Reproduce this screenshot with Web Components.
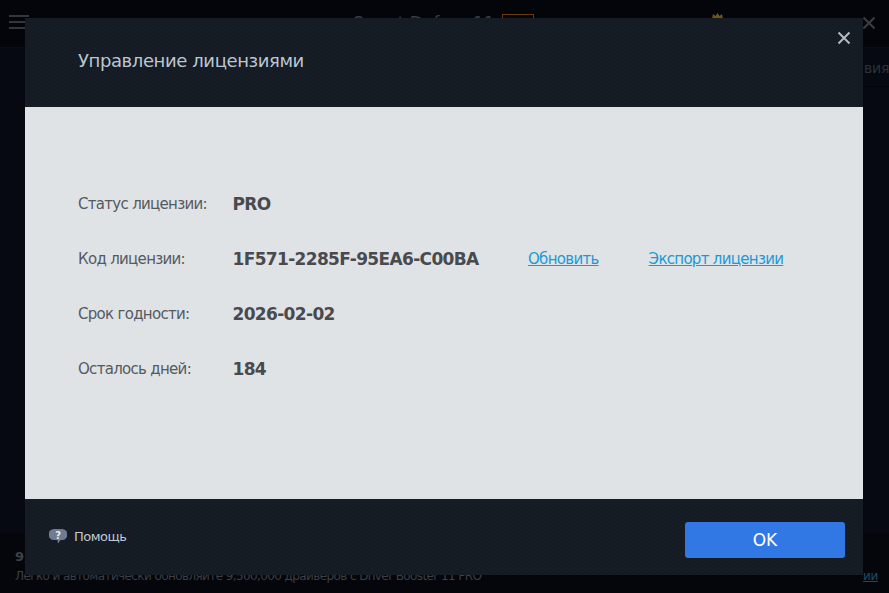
<!DOCTYPE html>
<html>
<head>
<meta charset="utf-8">
<title>Управление лицензиями</title>
<style>
    html, body { margin: 0; height: 100%; background: #04060c; overflow: hidden; }
    body { font-family: "DejaVu Sans", "Liberation Sans", sans-serif; }
</style>
</head>
<body>
<app-shell>
    <license-dialog heading="Управление лицензиями">
        <license-row label="Статус лицензии:" value="PRO"></license-row>
        <license-row label="Код лицензии:" value="1F571-2285F-95EA6-C00BA">
            <a href="#">Обновить</a>
            <a href="#">Экспорт лицензии</a>
        </license-row>
        <license-row label="Срок годности:" value="2026-02-02"></license-row>
        <license-row label="Осталось дней:" value="184"></license-row>
    </license-dialog>
</app-shell>

<script>
const TMP_SHELL = document.createElement('template');
TMP_SHELL.innerHTML = `
    <style>
        :host {
            display: block;
            position: relative;
            width: 889px;
            height: 593px;
            overflow: hidden;
            color: #3c4048;
            font-size: 12px;
        }
        #top {
            height: 47px;
            display: flex;
            align-items: flex-start;
            padding: 15px 0 0 9px;
            box-sizing: border-box;
            background: #03050b;
        }
        #burger { flex: none; width: 20px; height: 14px; border-top: 2px solid #33363b; border-bottom: 2px solid #33363b; position: relative; box-sizing: border-box; }
        #burger::after { content: ''; position: absolute; left: 0; right: 0; top: 4px; height: 2px; background: #33363b; }
        #title { flex: none; display: flex; width: 181px; justify-content: space-between; margin: -2px 0 0 324px; font-size: 17px; line-height: 20px; white-space: nowrap; color: #3a3d42; }
        #badge { display: block; width: 30px; height: 14px; margin-top: 1px; border: 1px solid #6b3a0c; }
        #crown { flex: none; width: 11px; height: 6px; margin: -2px 0 0 178px; }
        #close { flex: none; width: 12px; height: 12px; margin: 2px 0 0 140px; }
        #tab { position: absolute; left: 0; top: 47px; width: 25px; height: 3px; background: #172a4b; }
        #mid { height: 486px; background: #060911; position: relative; border-top: 1px solid #0b0e15; box-sizing: border-box; }
        #more { position: absolute; left: 864px; top: 0; width: 25px; height: 38px; line-height: 41px; overflow: hidden; font-size: 14px; letter-spacing: -.2px; color: #2e3238; border-bottom: 1px solid #02030a; }
        #bottom { height: 60px; background: #04060c; padding: 16px 0 0 15px; box-sizing: border-box; position: relative; }
        #bottom b { display: block; font-size: 13px; color: #3e4147; line-height: 15px; }
        #bottom span { display: block; margin-top: 5px; line-height: 15px; font-size: 12px; letter-spacing: -.6px; color: #3b3f46; white-space: nowrap; }
        #bottom a { position: absolute; left: 863px; top: 36px; color: #1d4a66; font-size: 12px; letter-spacing: -.4px; }
    </style>
    <div id="top">
        <div id="burger"></div>
        <div id="title"><span>Smart Defrag 11</span><span id="badge"></span></div>
        <svg id="crown" viewBox="0 0 11 6"><path d="M0 6 1 1 3.500 3 5.500 0 7.500 3 10 1 11 6z" fill="#6e5512"/></svg>
        <svg id="close" viewBox="0 0 12 12"><path d="M.5.500 11.500 11.500M11.500.500.500 11.500" stroke="#3a3e42" stroke-width="2" fill="none"/></svg>
    </div>
    <div id="tab"></div>
    <div id="mid"><span id="more">вия</span></div>
    <div id="bottom">
        <b>9,500,000</b>
        <span>Легко и автоматически обновляйте 9,500,000 драйверов с Driver Booster 11 PRO</span>
        <a href="#">ии</a>
    </div>
    <slot></slot>`;

class AppShell extends HTMLElement {
    constructor() {
        super();
        this.attachShadow({mode: 'open'}).append(TMP_SHELL.content.cloneNode(true));
    }
}

const TMP_DIALOG = document.createElement('template');
TMP_DIALOG.innerHTML = `
    <style>
        :host {
            display: flex;
            flex-direction: column;
            position: absolute;
            left: 25px;
            top: 18px;
            width: 838px;
            height: 557px;
        }
        header, footer {
            background-color: #151c25;
            background-image:
                repeating-linear-gradient(45deg, rgba(255,255,255,.012) 0 1px, transparent 1px 2.830px),
                repeating-linear-gradient(-45deg, rgba(0,0,0,.10) 0 1px, transparent 1px 2.830px);
        }
        header {
            height: 89px;
            display: flex;
            align-items: center;
            box-sizing: border-box;
            padding: 0 0 5px 53px;
            position: relative;
            color: #bcc6d2;
            font-size: 18px;
            letter-spacing: -.4px;
        }
        #x { position: absolute; right: 12px; top: 13px; width: 14px; height: 14px; }
        main {
            height: 392px;
            box-sizing: border-box;
            background: #dfe3e6;
            padding: 69px 53px 0;
            display: flex;
            flex-direction: column;
        }
        footer {
            flex: 1;
            display: flex;
            align-items: flex-start;
            justify-content: space-between;
            padding: 23px 18px 0 24px;
        }
        #help { display: flex; align-items: center; gap: 7px; color: #c3c9d0; font-size: 13px; letter-spacing: -.5px; height: 29px; }
        #help svg { width: 18px; height: 15px; }
        button {
            width: 160px;
            height: 36px;
            border: 0;
            border-radius: 3px;
            background: #3178e4;
            color: #fff;
            font: inherit;
            font-size: 17px;
        }
    </style>
    <header>
        <span id="heading"></span>
        <svg id="x" viewBox="0 0 14 14"><path d="M1.500 1.500 12.500 12.500M12.500 1.500 1.500 12.500" stroke="#b4bac1" stroke-width="2" fill="none"/></svg>
    </header>
    <main><slot></slot></main>
    <footer>
        <div id="help">
            <svg viewBox="0 0 18 15"><path d="M5 0h8a5.500 5.500 0 0 1 0 11h-1.500L9 14.500 8.500 11H5A5.500 5.500 0 0 1 5 0z" fill="#6f7c92"/><text x="9" y="9.500" text-anchor="middle" font-size="10" font-weight="700" font-family="DejaVu Sans" fill="#e8ebef">?</text></svg>
            <span>Помощь</span>
        </div>
        <button>OK</button>
    </footer>`;

class LicenseDialog extends HTMLElement {
    constructor() {
        super();
        this.attachShadow({mode: 'open'}).append(TMP_DIALOG.content.cloneNode(true));
    }

    connectedCallback() {
        this.shadowRoot.getElementById('heading').textContent = this.getAttribute('heading');
    }
}

const TMP_ROW = document.createElement('template');
TMP_ROW.innerHTML = `
    <style>
        :host {
            display: flex;
            align-items: center;
            height: 55px;
            white-space: nowrap;
        }
        #label { width: 154.500px; font-size: 15px; letter-spacing: -.7px; color: #555a60; }
        #value { width: 295.500px; font-size: 17px; letter-spacing: -.65px; font-weight: 700; color: #4a4a4e; }
        #links { display: flex; gap: 50px; font-size: 15px; letter-spacing: -.7px; }
        ::slotted(a) { color: #1a9ad6; text-decoration: underline; }
    </style>
    <span id="label"></span>
    <span id="value"></span>
    <div id="links"><slot></slot></div>`;

class LicenseRow extends HTMLElement {
    constructor() {
        super();
        this.attachShadow({mode: 'open'}).append(TMP_ROW.content.cloneNode(true));
    }

    connectedCallback() {
        this.shadowRoot.getElementById('label').textContent = this.getAttribute('label');
        this.shadowRoot.getElementById('value').textContent = this.getAttribute('value');
    }
}

customElements.define('app-shell', AppShell);
customElements.define('license-dialog', LicenseDialog);
customElements.define('license-row', LicenseRow);
</script>
</body>
</html>
